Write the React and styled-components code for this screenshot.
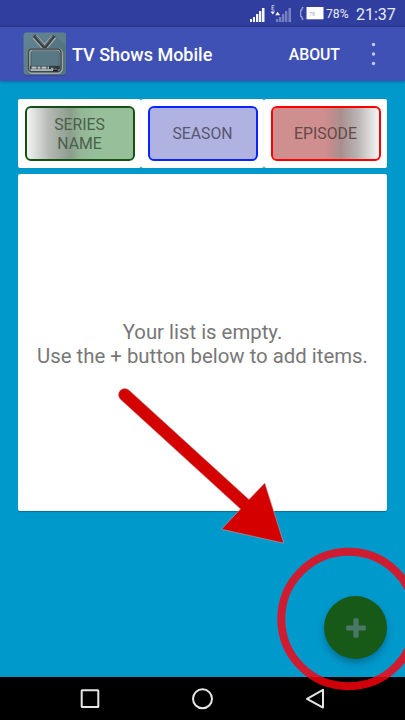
import React from "react";
import styled, { createGlobalStyle } from "styled-components";

const GlobalStyle = createGlobalStyle`
  * { box-sizing: border-box; }
  body { margin: 0; font-family: Roboto, "Noto Sans", sans-serif; overflow: hidden; }
`;

const Screen = styled.div`
  position: relative;
  display: flex;
  flex-direction: column;
  width: 405px;
  height: 720px;
  overflow: hidden;
  background: #0099cc;
`;

const StatusBar = styled.div`
  display: flex;
  align-items: center;
  justify-content: flex-end;
  flex: none;
  height: 27px;
  padding-right: 9px;
  background: linear-gradient(#303f9f 24px, #2b388e);
  color: #e9ebf7;
`;

const StatusIcons = styled.svg`
  flex: none;
  width: 77px;
  height: 27px;
`;

const Percent = styled.span`
  width: 30px;
  font-size: 12.2px;
  line-height: 27px;
  padding-top: 1px;
  white-space: nowrap;
`;

const Clock = styled.span`
  width: 40px;
  font-size: 16px;
  line-height: 27px;
  padding-top: 1px;
  white-space: nowrap;
`;

const AppBar = styled.header`
  display: flex;
  align-items: center;
  flex: none;
  height: 54px;
  padding: 0 29px 0 23px;
  background: #3f51b5;
  color: #fff;
  box-shadow: 0 1px 3px rgba(0, 40, 60, 0.35);
`;

const Logo = styled.svg`
  width: 44px;
  height: 44px;
`;

const Title = styled.h1`
  flex: 1;
  margin: 1px 0 0 5px;
  font-size: 18px;
  font-weight: 500;
  white-space: nowrap;
`;

const AboutButton = styled.button`
  padding: 1px 0 0;
  margin-right: 31px;
  border: 0;
  background: none;
  color: #fff;
  font: 500 15.8px Roboto, sans-serif;
`;

const MoreIcon = styled.svg`
  width: 5px;
  height: 26px;
  fill: #c5caeb;
`;

const Content = styled.main`
  display: flex;
  flex-direction: column;
  flex: 1;
  gap: 6px;
  padding: 18px 18px 0;
`;

const Filters = styled.div`
  display: grid;
  grid-template-columns: repeat(3, minmax(0, 1fr));
  height: 69px;
`;

const FilterCard = styled.div`
  display: flex;
  padding: 7px 6.5px;
  border-radius: 2px;
  background: #fff;
  box-shadow: 0 0 1px rgba(0, 0, 0, 0.22);
`;

const FilterButton = styled.button`
  flex: 1;
  min-width: 0;
  padding: 0 18px;
  border: 2px solid ${(p) => p.$border};
  border-radius: 6px;
  background: ${(p) => p.$fill};
  background-clip: padding-box;
  color: ${(p) => p.$color};
  font: 400 15.8px/19px Roboto, sans-serif;
`;

const ListCard = styled.section`
  display: flex;
  align-items: center;
  justify-content: center;
  height: 337px;
  padding-top: 2px;
  border-radius: 2px;
  background: #fff;
  box-shadow: 0 1px 1px rgba(0, 0, 0, 0.25);
`;

const EmptyText = styled.p`
  margin: 0;
  color: #777;
  font-size: 20.35px;
  line-height: 24px;
  text-align: center;
  white-space: nowrap;
`;

const AddButton = styled.button`
  position: absolute;
  left: 324px;
  top: 596px;
  display: flex;
  align-items: center;
  justify-content: center;
  width: 63px;
  height: 63px;
  padding: 0;
  border: 0;
  border-radius: 50%;
  background: #175917;
  box-shadow: 0 4px 7px rgba(0, 45, 70, 0.38);
`;

const NavBar = styled.nav`
  flex: none;
  height: 43px;
  background: #000;
`;

const NavIcons = styled.svg`
  display: block;
  width: 405px;
  height: 43px;
  fill: none;
  stroke: #e6e6e6;
  stroke-width: 2;
`;

const Annotation = styled.svg`
  position: absolute;
  inset: 0;
  width: 405px;
  height: 720px;
  pointer-events: none;
`;

const FILTERS = [
  {
    label: "SERIES NAME",
    border: "#145214",
    color: "#4a604b",
    fill: "linear-gradient(90deg, #f4f4f4 0, #b5b9b5 22px, #8c9d8d 43px, #94b797 54px, #97bf9a 70px)",
  },
  { label: "SEASON", border: "#0a24ff", color: "#56576e", fill: "#b0b2e2" },
  {
    label: "EPISODE",
    border: "#ff0000",
    color: "#654848",
    fill: "linear-gradient(90deg, #cf8f8f 50px, #c68c8c 57px, #a98f8f 68px, #b8b2b2 84px, #f6f6f6)",
  },
];

function TvLogo() {
  return (
    <Logo viewBox="0 0 44 44">
      <defs>
        <linearGradient id="tile" x1="0" y1="0" x2="1" y2="1">
          <stop offset="0" stopColor="#638493" />
          <stop offset="1" stopColor="#557680" />
        </linearGradient>
      </defs>
      <rect x="0.7" y="1.4" width="42.6" height="42.4" rx="3" fill="#36477d" />
      <rect x="0.5" y="0.6" width="42.6" height="42.2" rx="3" fill="url(#tile)" />
      <path d="M32 3 43 14V40L38 42V18L22 18Z" fill="#4c6e79" opacity=".45" />
      <path d="M11.8 4.8 21.5 15.8 31 4.8" fill="none" stroke="#a3adaf" strokeWidth="5.4" strokeLinejoin="round" />
      <path d="M11 3.6 21.7 15.8 31.2 3.8" fill="none" stroke="#394043" strokeWidth="3.2" />
      <path d="M12.5 4.2 21.6 14.2 29.8 4" fill="none" stroke="#6c7678" strokeWidth="1" />
      <rect x="6.2" y="17.7" width="32" height="22.5" rx="3.5" fill="#577884" stroke="#a1abad" strokeWidth="3.4" />
      <rect x="5.4" y="17" width="32.6" height="22.8" rx="3.5" fill="none" stroke="#3f474a" strokeWidth="1.5" />
      <path d="M8 34V21Q8 19 10 19H34Q36.2 19 36.2 21V34" fill="none" stroke="#4d6068" strokeWidth="1" />
      <path d="M7 35.6H37" stroke="#343b3e" strokeWidth="3.4" />
      <path d="M8.5 35.7H26" stroke="#b9c2c4" strokeWidth="2.2" strokeDasharray="5 1 3 1" />
      <path d="M8 38H31" stroke="#c4cccd" strokeWidth="1.3" />
      <path d="M28 36.5H30.5M32 37.5H33.5" stroke="#9ca6a8" strokeWidth="1.5" />
      <path d="M30 38.5H35" stroke="#202526" strokeWidth="1.8" />
    </Logo>
  );
}

export default function App() {
  return (
    <Screen>
      <GlobalStyle />
      <StatusBar>
        <StatusIcons viewBox="249 0 77 27">
          <path d="M250 19h2v3h-2zM253 17h2v5h-2zM256 14h2.3v8H256zM259 11h2.3v11H259zM262 8h2.5v14H262z" fill="#f5f6fc" />
          <path d="M276 19h2.2v3H276zM279 17h2.3v5H279zM282 14h2.3v8H282zM285 11h2.3v11H285zM288.5 8h2.5v14h-2.5z" fill="#7882c1" />
          <path d="M274.5 5.5h-2.5v4.5h2.5M272 7.8h2.2" fill="none" stroke="#d5d8ee" strokeWidth=".8" />
          <path d="M270.5 11.5h4.5L272.7 14.5zM275.2 15.2h4.8L277.7 11.8z" fill="#f5f6fc" />
          <path d="M303.5 7.7h-1.5v2.5h-1.3v6.5h1.3v2.5h1.5" fill="none" stroke="#b9bddf" />
          <rect x="306.5" y="7" width="17" height="12.3" fill="#fff" />
          <text x="309" y="15.5" fontSize="5.5" fill="#a9acc8">78</text>
        </StatusIcons>
        <Percent>78%</Percent>
        <Clock>21:37</Clock>
      </StatusBar>

      <AppBar>
        <TvLogo />
        <Title>TV Shows Mobile</Title>
        <AboutButton>ABOUT</AboutButton>
        <MoreIcon viewBox="0 0 5 26">
          <circle cx="2.5" cy="3.5" r="1.7" />
          <circle cx="2.5" cy="13" r="1.7" />
          <circle cx="2.5" cy="22.5" r="1.7" />
        </MoreIcon>
      </AppBar>

      <Content>
        <Filters>
          {FILTERS.map((f) => (
            <FilterCard key={f.label}>
              <FilterButton $border={f.border} $fill={f.fill} $color={f.color}>
                {f.label}
              </FilterButton>
            </FilterCard>
          ))}
        </Filters>
        <ListCard>
          <EmptyText>
            Your list is empty.
            <br />
            Use the + button below to add items.
          </EmptyText>
        </ListCard>
      </Content>

      <AddButton aria-label="Add">
        <svg width="20" height="20" viewBox="0 0 20 20">
          <path
            d="M8.2.2h3.6q.8 0 .8.8v6.4H19q.8 0 .8.8v3.6q0 .8-.8.8h-6.4V19q0 .8-.8.8H8.2q-.8 0-.8-.8v-6.4H1q-.8 0-.8-.8V8.2q0-.8.8-.8h6.4V1q0-.8.8-.8Z"
            fill="#4b7768"
          />
        </svg>
      </AddButton>

      <NavBar>
        <NavIcons viewBox="0 677 405 43">
          <rect x="81.7" y="690.3" width="16.6" height="16.8" rx=".5" />
          <circle cx="202.5" cy="698.8" r="9.5" />
          <path d="M323 689.8V707.6L307 698.8Z" strokeLinejoin="round" />
        </NavIcons>
      </NavBar>

      <Annotation viewBox="0 0 405 720">
        <path d="M129.2 390.3 249 499.5 264.8 483 283.8 543.2 221.5 529.2 240.5 509 120.3 399.2A6.2 6.2 0 0 1 129.2 390.3Z" fill="#d40000" stroke="#b8a5aa" strokeWidth=".6" />
        <circle cx="348.5" cy="619" r="67.2" fill="none" stroke="#fe000e" strokeOpacity=".82" strokeWidth="8" />
      </Annotation>
    </Screen>
  );
}
